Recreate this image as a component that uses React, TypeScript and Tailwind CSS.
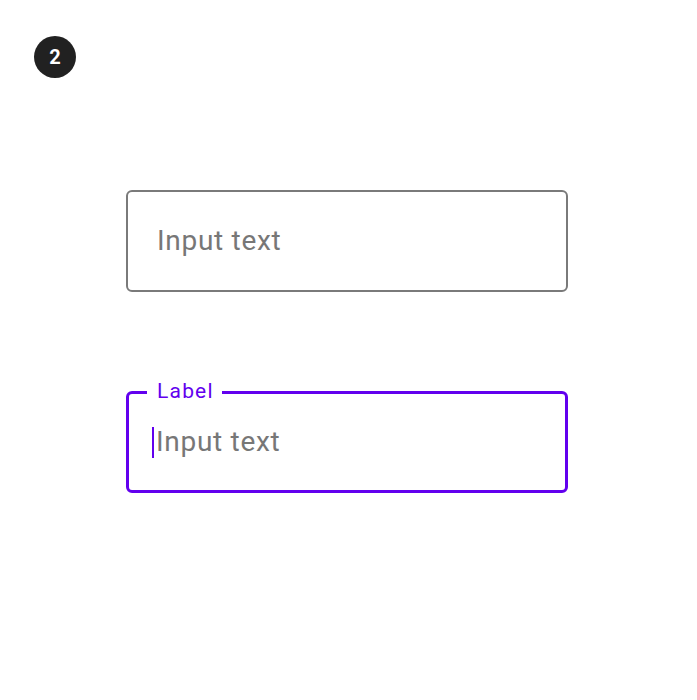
export default function App() {
  return (
    <div className="w-[697px] h-[700px] bg-white font-['Roboto',sans-serif] flex flex-col">
      <div className="ml-[34px] mt-[36px] w-[42px] h-[42px] rounded-full bg-[#212121] flex items-center justify-center text-white text-[20px] font-bold">
        2
      </div>

      <div className="ml-[126px] mt-[112px] w-[442px] h-[102px] rounded-[6px] border-2 border-[#7a7a7a] flex items-center pl-[29px]">
        <span className="text-[28px] tracking-[0.7px] text-[#777777]">Input text</span>
      </div>

      <div className="relative ml-[126px] mt-[99px] w-[442px] h-[102px] rounded-[6px] border-[3px] border-[#6200ee] flex items-center pl-[23px]">
        <span className="absolute -top-[17px] left-[18px] bg-white pl-[10px] pr-[8px] text-[21px] leading-[28px] tracking-[1.2px] text-[#6200ee]">
          Label
        </span>
        <span className="w-[2px] h-[31px] bg-[#6200ee] mr-[2px]" />
        <span className="text-[28px] tracking-[0.7px] text-[#777777]">Input text</span>
      </div>
    </div>
  );
}
